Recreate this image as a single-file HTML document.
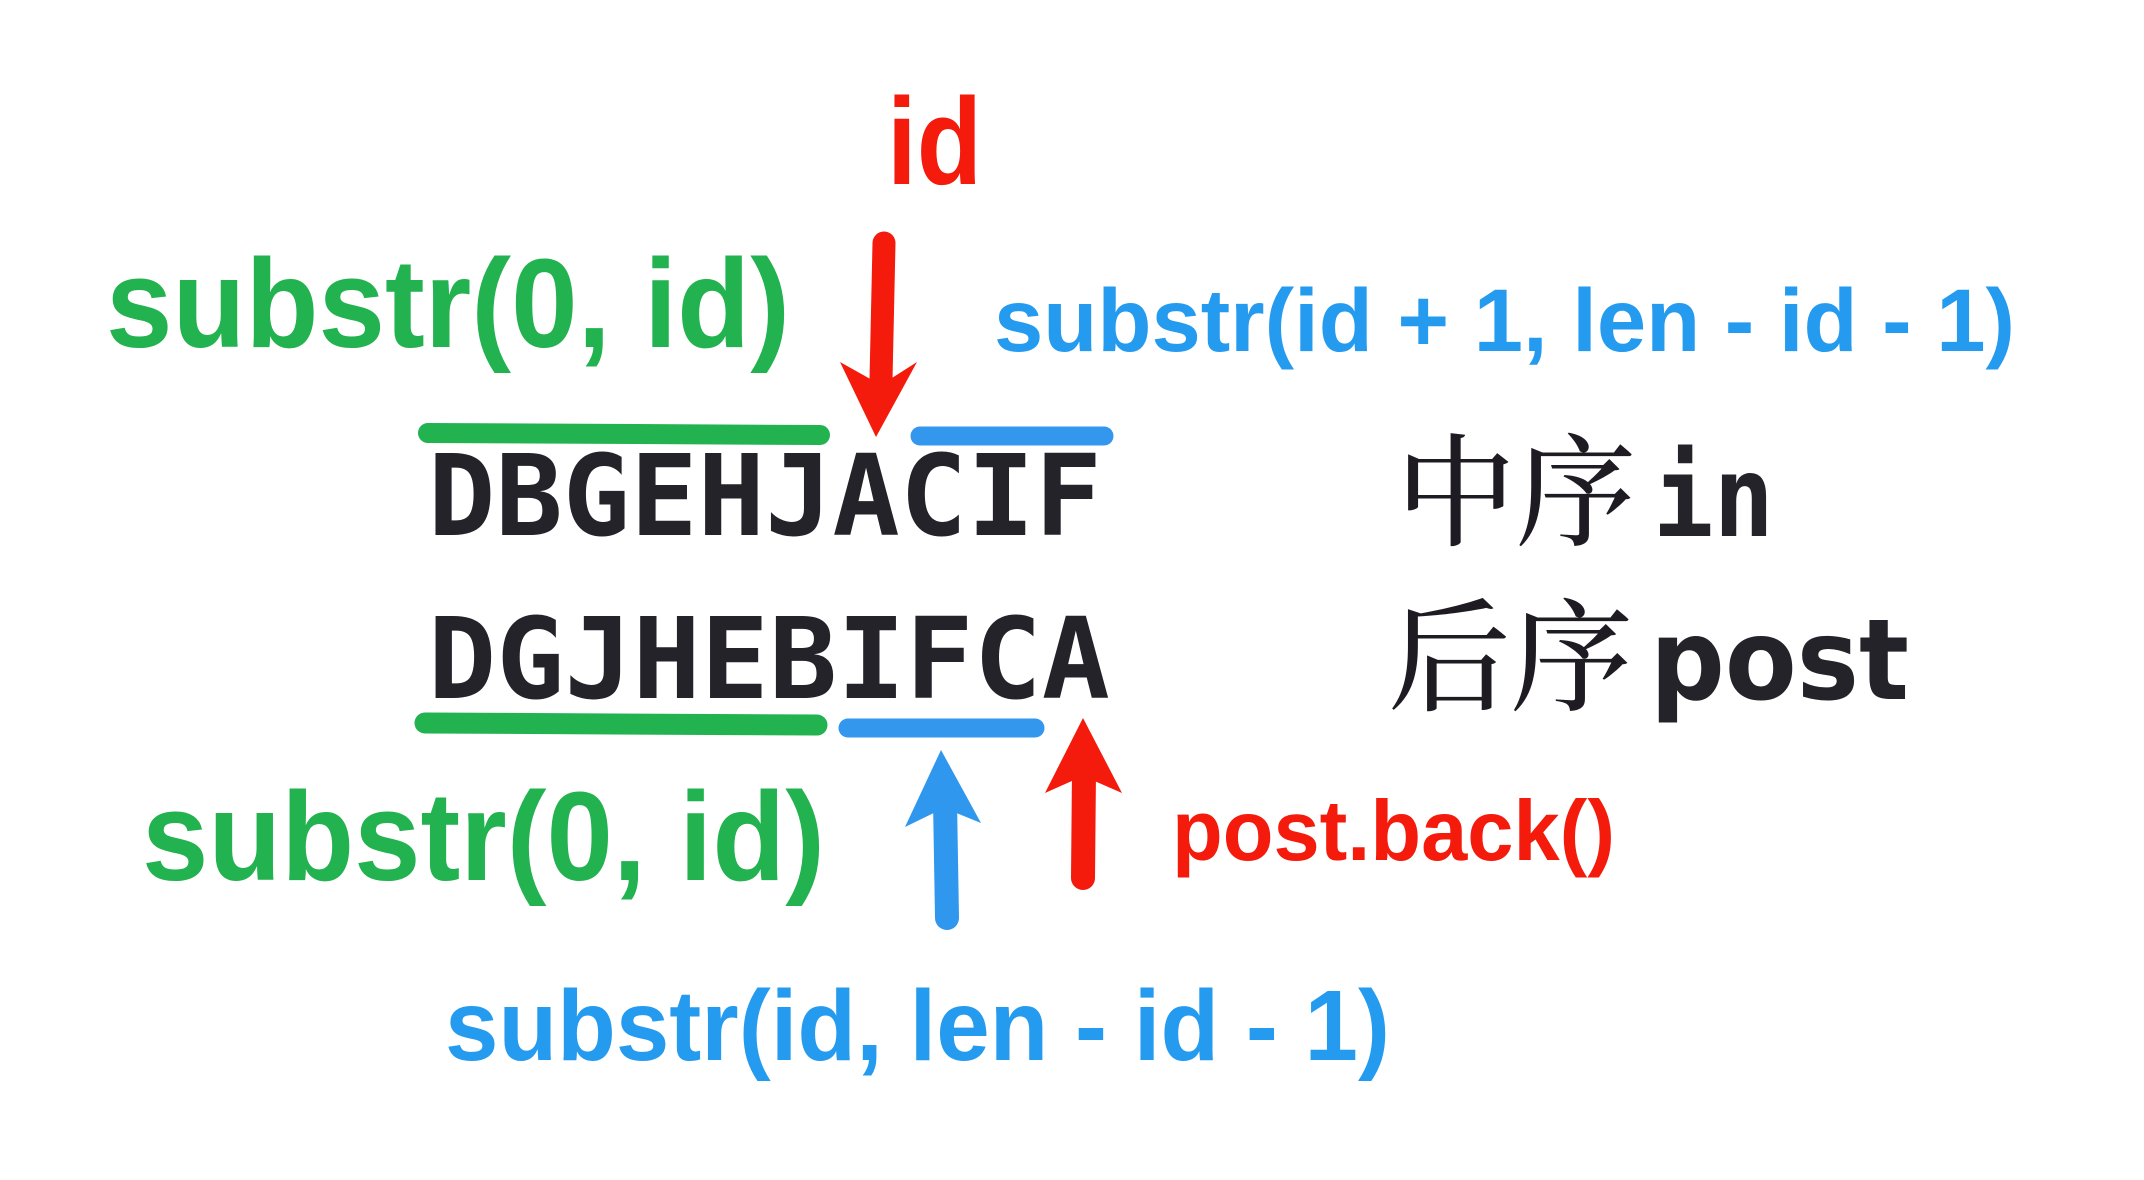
<!DOCTYPE html>
<html><head><meta charset="utf-8"><style>
html,body{margin:0;padding:0;background:#fff;width:2144px;height:1180px;overflow:hidden}
svg{display:block}
.s{font-family:"Liberation Sans","DejaVu Sans",sans-serif;font-weight:bold}
.m{font-family:"DejaVu Sans Mono","Liberation Mono",monospace;font-weight:bold;fill:#25232a}
.c{font-family:"Noto Serif CJK SC","Noto Sans CJK SC",serif;fill:#1e1c22;font-weight:500}
</style></head><body>
<svg width="2144" height="1180" viewBox="0 0 2144 1180" xmlns="http://www.w3.org/2000/svg">
<text class="s" x="887" y="184" font-size="123" fill="#f41a0c" textLength="95" lengthAdjust="spacingAndGlyphs">id</text>
<line x1="884" y1="243" x2="881" y2="380" stroke="#f41a0c" stroke-width="23" stroke-linecap="round"/>
<polygon points="840,362 876,437 917,362 881,385" fill="#f41a0c"/>
<text class="s" x="106" y="347" font-size="126" fill="#22b24f" textLength="684" lengthAdjust="spacingAndGlyphs">substr(0, id)</text>
<text class="s" x="994" y="351" font-size="89" fill="#259bf0" textLength="1021" lengthAdjust="spacingAndGlyphs">substr(id + 1, len - id - 1)</text>
<line x1="428" y1="433" x2="820" y2="435" stroke="#22b24f" stroke-width="20" stroke-linecap="round"/>
<line x1="920" y1="436" x2="1104" y2="436" stroke="#3497ee" stroke-width="19" stroke-linecap="round"/>
<text class="m" x="428" y="535" font-size="112" textLength="674" lengthAdjust="spacingAndGlyphs">DBGEHJACIF</text>
<text class="m" x="428" y="698" font-size="112" textLength="682" lengthAdjust="spacingAndGlyphs">DGJHEBIFCA</text>
<text class="c" x="1396" y="536" font-size="122" textLength="240" lengthAdjust="spacingAndGlyphs">中序</text>
<text class="m" x="1653" y="536" font-size="112" textLength="121" lengthAdjust="spacingAndGlyphs">in</text>
<text class="c" x="1388" y="701" font-size="122" textLength="245" lengthAdjust="spacingAndGlyphs">后序</text>
<text class="s" x="1650" y="699" font-size="112" fill="#25232a" style="font-family:'DejaVu Sans','Liberation Sans',sans-serif" textLength="259" lengthAdjust="spacingAndGlyphs">post</text>
<line x1="425" y1="723" x2="817" y2="725" stroke="#22b24f" stroke-width="21" stroke-linecap="round"/>
<line x1="848" y1="728" x2="1035" y2="728" stroke="#3497ee" stroke-width="19" stroke-linecap="round"/>
<line x1="945" y1="800" x2="947" y2="918" stroke="#2f97ee" stroke-width="24" stroke-linecap="round"/>
<polygon points="941,750 905,827 944,808 981,823" fill="#2f97ee"/>
<line x1="1084" y1="770" x2="1083" y2="878" stroke="#f41a0c" stroke-width="24" stroke-linecap="round"/>
<polygon points="1083,718 1045,793 1083,776 1122,793" fill="#f41a0c"/>
<text class="s" x="142" y="880" font-size="126" fill="#22b24f" textLength="683" lengthAdjust="spacingAndGlyphs">substr(0, id)</text>
<text class="s" x="1172" y="860" font-size="85" fill="#f41a0c" textLength="443" lengthAdjust="spacingAndGlyphs">post.back()</text>
<text class="s" x="445" y="1060" font-size="100" fill="#259bf0" textLength="945" lengthAdjust="spacingAndGlyphs">substr(id, len - id - 1)</text>
</svg>
</body></html>
